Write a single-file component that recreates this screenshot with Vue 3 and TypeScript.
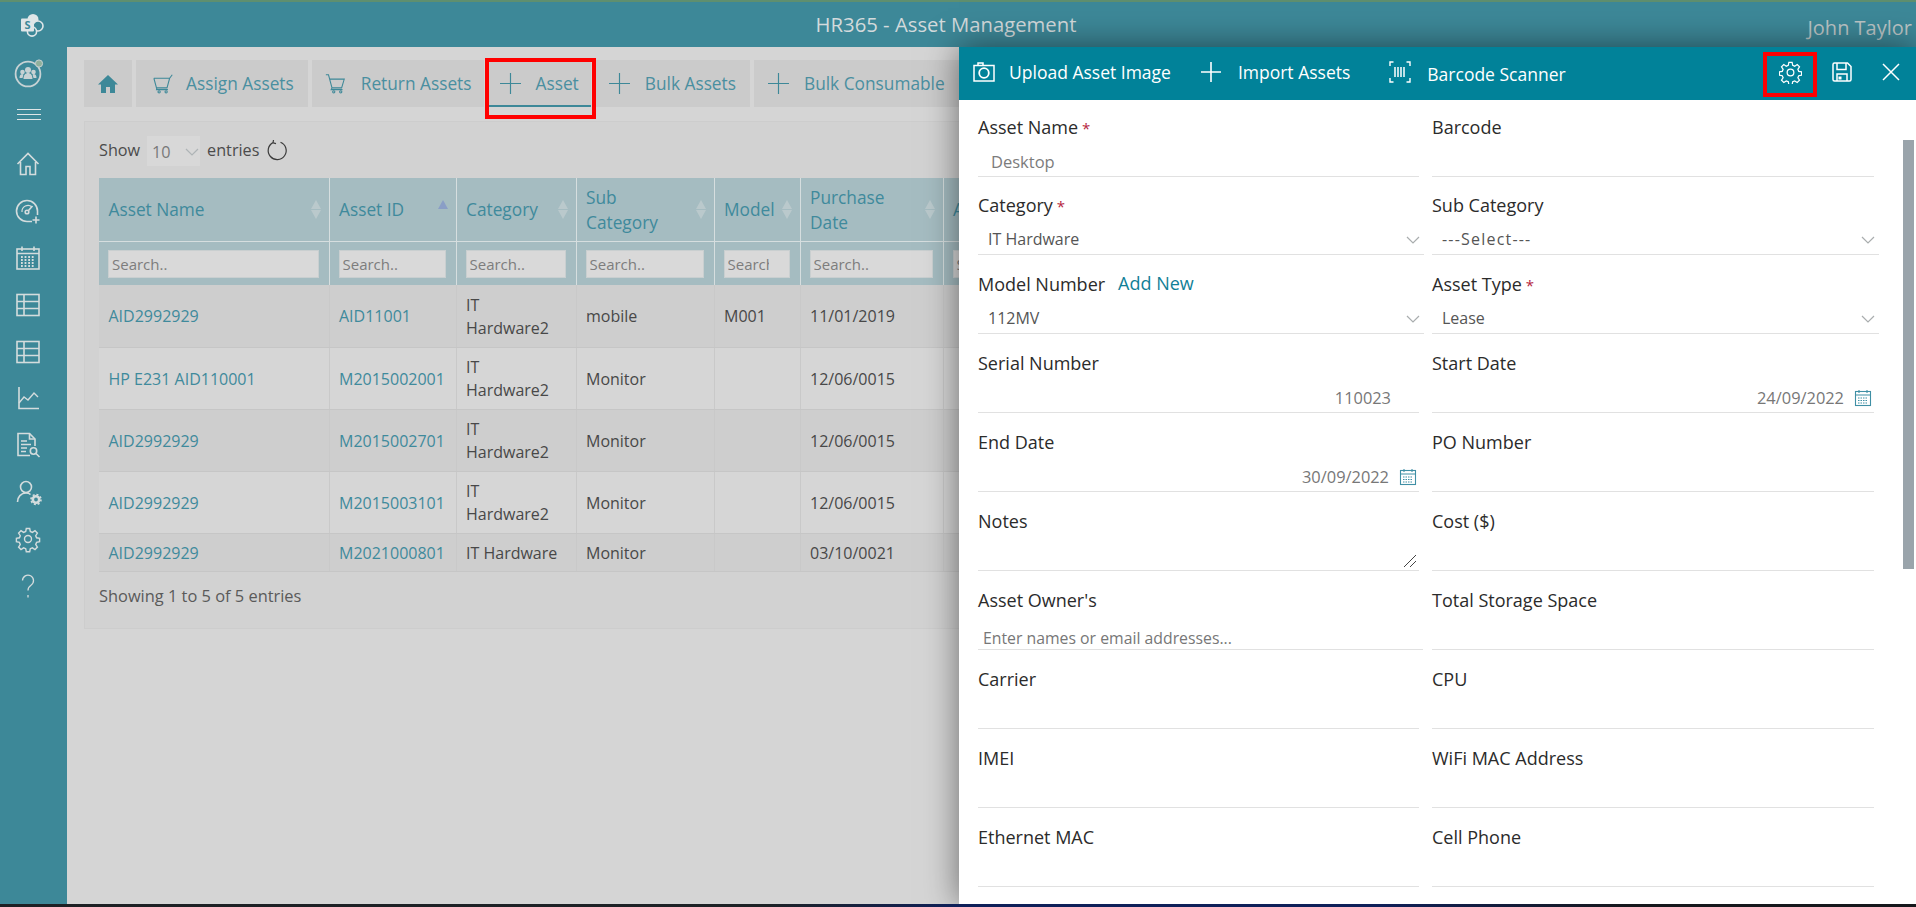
<script setup lang="ts">
interface Row { name: string; id: string; cat: string; sub: string; model: string; date: string; two: boolean }
interface Field { label: string; req?: boolean; add?: boolean; kind?: 'select' | 'value' | 'date' | 'notes' | 'owner' | 'placeholder'; value?: string }

const navIcons = ['home', 'gauge', 'calendar', 'table', 'table', 'chart', 'report', 'user', 'gear', 'help']

const headers = [
  { label: 'Asset Name', sort: 'both' }, { label: 'Asset ID', sort: 'up' }, { label: 'Category', sort: 'both' },
  { label: 'Sub Category', sort: 'both' }, { label: 'Model', sort: 'both' }, { label: 'Purchase Date', sort: 'both' },
  { label: 'Asset Type', sort: 'both' }
]

const rows: Row[] = [
  { name: 'AID2992929', id: 'AID11001', cat: 'IT Hardware2', sub: 'mobile', model: 'M001', date: '11/01/2019', two: true },
  { name: 'HP E231 AID110001', id: 'M2015002001', cat: 'IT Hardware2', sub: 'Monitor', model: '', date: '12/06/0015', two: true },
  { name: 'AID2992929', id: 'M2015002701', cat: 'IT Hardware2', sub: 'Monitor', model: '', date: '12/06/0015', two: true },
  { name: 'AID2992929', id: 'M2015003101', cat: 'IT Hardware2', sub: 'Monitor', model: '', date: '12/06/0015', two: true },
  { name: 'AID2992929', id: 'M2021000801', cat: 'IT Hardware', sub: 'Monitor', model: '', date: '03/10/0021', two: false }
]

const fields: Field[] = [
  { label: 'Asset Name', req: true, kind: 'placeholder', value: 'Desktop' }, { label: 'Barcode' },
  { label: 'Category', req: true, kind: 'select', value: 'IT Hardware' }, { label: 'Sub Category', kind: 'select', value: '---Select---' },
  { label: 'Model Number', add: true, kind: 'select', value: '112MV' }, { label: 'Asset Type', req: true, kind: 'select', value: 'Lease' },
  { label: 'Serial Number', kind: 'value', value: '110023' }, { label: 'Start Date', kind: 'date', value: '24/09/2022' },
  { label: 'End Date', kind: 'date', value: '30/09/2022' }, { label: 'PO Number' },
  { label: 'Notes', kind: 'notes' }, { label: 'Cost ($)' },
  { label: "Asset Owner's", kind: 'owner' }, { label: 'Total Storage Space' },
  { label: 'Carrier' }, { label: 'CPU' },
  { label: 'IMEI' }, { label: 'WiFi MAC Address' },
  { label: 'Ethernet MAC' }, { label: 'Cell Phone' }
]
</script>

<template>
  <div class="app">
    <header class="topbar">
      <svg class="sp-logo" viewBox="0 0 24 24" width="24" height="24">
        <circle cx="13" cy="6.500" r="5.500" fill="#dfe6e8" />
        <circle cx="18" cy="13" r="5" fill="#3d8898" stroke="#dfe6e8" stroke-width="1.600" />
        <circle cx="12" cy="18.500" r="4.600" fill="#3d8898" stroke="#dfe6e8" stroke-width="1.600" />
        <rect x="1" y="5.500" width="13" height="13" rx="1" fill="#dfe6e8" />
        <text x="7.500" y="15.600" text-anchor="middle" class="sp-s">S</text>
      </svg>
      <h1 class="title">HR365 - Asset Management</h1>
      <div class="user">John Taylor</div>
    </header>

    <div class="body">
      <aside class="sidebar">
        <div class="org">
          <svg viewBox="0 0 30 30" width="30" height="30">
            <circle cx="14" cy="16" r="12.400" fill="none" stroke="#c7d2d4" stroke-width="1.800" />
            <circle cx="25" cy="5.500" r="3.600" fill="#8fb09c" stroke="#c7d2d4" />
            <circle cx="14" cy="12" r="3" fill="#c7d2d4" /><circle cx="8.500" cy="14" r="2.300" fill="#c7d2d4" /><circle cx="19.500" cy="14" r="2.300" fill="#c7d2d4" />
            <path d="M9.500 21c0-4 2-6 4.500-6s4.500 2 4.500 6zM5.500 20c0-2.500 1-4 3-4l1 .5-1 3.500zM22.500 20c0-2.500-1-4-3-4l-1 .5 1 3.500z" fill="#c7d2d4" />
          </svg>
        </div>
        <div class="burger"><span></span><span></span><span></span></div>
        <nav class="nav">
          <div v-for="(icon, i) in navIcons" :key="i" class="nav-item">
            <svg viewBox="0 0 28 28" width="28" height="28" fill="none" stroke="#d4dcdd" stroke-width="1.600">
              <template v-if="icon === 'home'">
                <path d="M3.500 14 14 3.500 24.500 14M6.500 12v12.500h5.500v-8h4v8h5.500V12" />
              </template>
              <template v-else-if="icon === 'gauge'">
                <path d="M18 24.500H13a10.500 10.500 0 1 1 10.500-10.500v4" />
                <path d="M8 15a6 6 0 0 1 10-5" stroke-width="1.200" />
                <circle cx="13" cy="15" r="1.800" />
                <path d="m14.500 13.500 4-4.500M22 19.500v7M18.500 23h7" />
              </template>
              <template v-else-if="icon === 'calendar'">
                <rect x="3" y="5" width="22" height="20" /><path d="M3 9.500h22M8 2.500V7M20 2.500V7" />
                <path d="M7 13h14M7 16h14M7 19h14M7 22h14" stroke-dasharray="1.800 1.800" stroke-width="1.800" />
              </template>
              <template v-else-if="icon === 'table'">
                <rect x="3" y="3.500" width="22" height="21" /><path d="M3 10.500h22M3 17.500h22M10 3.500v21" />
              </template>
              <template v-else-if="icon === 'chart'">
                <path d="M5 3v21.500h20" /><path d="m5 19 5-6 4 3 6-7 4 4" stroke-width="1.400" />
              </template>
              <template v-else-if="icon === 'report'">
                <path d="M21 15V8l-5.500-5.500H4v22h12" /><path d="M15.500 2.500V8H21" />
                <path d="M7 10h6M7 13.500h10M7 17h6M7 20.500h5" />
                <circle cx="19.500" cy="20" r="3.200" /><path d="m22 22.500 3.500 3.500" />
              </template>
              <template v-else-if="icon === 'user'">
                <circle cx="12" cy="9" r="5.500" />
                <path d="M3.500 24c0-5 3.500-9 8.500-9 2 0 3.500.5 4.500 1.500" />
                <circle cx="22" cy="21.500" r="3.200" stroke-width="2.600" />
                <circle cx="22" cy="21.500" r="5" stroke-width="1.600" stroke-dasharray="2 1.900" />
              </template>
              <template v-else-if="icon === 'gear'">
                <g transform="translate(2 2)" stroke-width="1.400">
                  <circle cx="12" cy="12" r="3.500" />
                  <path d="M10.300 1.500h3.400l.6 3 2.100.9 2.600-1.700 2.400 2.400-1.700 2.600.9 2.100 3 .6v3.400l-3 .6-.9 2.100 1.700 2.600-2.400 2.400-2.600-1.700-2.100.9-.6 3h-3.400l-.6-3-2.100-.9-2.600 1.700-2.400-2.400 1.700-2.600-.9-2.100-3-.6v-3.400l3-.6.9-2.100-1.700-2.600 2.400-2.400 2.600 1.700 2.100-.9z" />
                </g>
              </template>
              <template v-else>
                <path d="M8.500 8.500a5.500 5.500 0 1 1 8.500 4.700c-2 1.300-3 2.500-3 5.300M14 23v2.500" stroke-width="1.300" />
              </template>
            </svg>
          </div>
        </nav>
      </aside>

      <main class="main">
        <div class="tabs">
          <div class="tab tab-home">
            <svg viewBox="0 0 20 20" width="20" height="20"><path d="M10 1 0 10.500h3V19h5v-6h4v6h5v-8.500h3z" fill="#3d8898" /></svg>
          </div>
          <div class="tab tab-assign">
            <svg class="tab-ic" viewBox="0 0 24 24" fill="none" stroke="#3d8898" stroke-width="1.200">
              <path d="M1 6h18l3-4M1 6l3 11h12l3-11M4.500 17 4 19h13" /><circle cx="7" cy="21.500" r="1.300" /><circle cx="15" cy="21.500" r="1.300" />
            </svg>
            <span>Assign Assets</span>
          </div>
          <div class="tab tab-return">
            <svg class="tab-ic" viewBox="0 0 24 24" fill="none" stroke="#3d8898" stroke-width="1.200">
              <path d="M1 2h3l4 15h11l3-10H5.500M8 17l-1 2h13" /><circle cx="10" cy="21.500" r="1.300" /><circle cx="18" cy="21.500" r="1.300" />
            </svg>
            <span>Return Assets</span>
          </div>
          <div class="tab tab-active">
            <svg class="tab-ic" viewBox="0 0 22 22" fill="none" stroke="#3d8898" stroke-width="1.200"><path d="M11 0v22M0 11h22" /></svg>
            <span>Asset</span>
          </div>
          <div class="tab">
            <svg class="tab-ic" viewBox="0 0 22 22" fill="none" stroke="#3d8898" stroke-width="1.200"><path d="M11 0v22M0 11h22" /></svg>
            <span>Bulk Assets</span>
          </div>
          <div class="tab">
            <svg class="tab-ic" viewBox="0 0 22 22" fill="none" stroke="#3d8898" stroke-width="1.200"><path d="M11 0v22M0 11h22" /></svg>
            <span>Bulk Consumable</span>
          </div>
        </div>

        <section class="card">
          <div class="show">
            <span>Show</span>
            <div class="len"><span>10</span>
              <svg viewBox="0 0 14 8" width="14" height="8" fill="none" stroke="#aeb4b6" stroke-width="1.200"><path d="m1 1 6 6 6-6" /></svg>
            </div>
            <span>entries</span>
            <svg class="refresh" viewBox="0 0 22 22" width="22" height="22" fill="none" stroke="#3b3b3b" stroke-width="1.200">
              <path d="M7 3.600a9 9 0 1 0 7.500-.4M7.500 1l-.5 2.900 3 .8" />
            </svg>
          </div>
          <table class="grid">
            <colgroup>
              <col class="c1" /><col class="c2" /><col class="c3" /><col class="c4" /><col class="c5" /><col class="c6" /><col class="c7" />
            </colgroup>
            <thead>
              <tr class="head">
                <th v-for="h in headers" :key="h.label">
                  <span class="h-text">{{ h.label }}</span>
                  <span class="sort">
                    <i class="up" :class="{ active: h.sort === 'up' }"></i>
                    <i v-if="h.sort === 'both'" class="down"></i>
                  </span>
                </th>
              </tr>
              <tr class="filter">
                <th v-for="h in headers" :key="h.label"><input placeholder="Search.." /></th>
              </tr>
            </thead>
            <tbody>
              <tr v-for="(r, i) in rows" :key="i" :class="[i % 2 ? 'even' : 'odd', { two: r.two }]">
                <td class="link">{{ r.name }}</td>
                <td class="link">{{ r.id }}</td>
                <td class="cat">{{ r.cat }}</td>
                <td>{{ r.sub }}</td>
                <td>{{ r.model }}</td>
                <td>{{ r.date }}</td>
                <td></td>
              </tr>
            </tbody>
          </table>
          <div class="info">Showing 1 to 5 of 5 entries</div>
        </section>
      </main>
    </div>

    <section class="panel">
      <div class="p-head">
        <div class="p-act act-upload">
          <svg viewBox="0 0 22 20" width="22" height="20" fill="none" stroke="#fff" stroke-width="1.500">
            <rect x="1" y="3.500" width="20" height="15.500" /><path d="M5 3.500V1h5v2.500" /><circle cx="11" cy="11" r="4.800" stroke-width="1.800" />
          </svg>
          <span>Upload Asset Image</span>
        </div>
        <div class="p-act act-import">
          <svg viewBox="0 0 22 22" width="22" height="22" fill="none" stroke="#fff" stroke-width="1.600"><path d="M11 1v20M1 11h20" /></svg>
          <span>Import Assets</span>
        </div>
        <div class="p-act act-barcode">
          <svg viewBox="0 0 22 22" width="22" height="22" fill="none" stroke="#fff" stroke-width="1.400">
            <path d="M4.500 1H1v4M17.500 1H21v4M4.500 21H1v-4M17.500 21H21v-4" />
            <path d="M6 6v10M9 6v10M12 6v10M15 6v10" stroke-width="1.500" />
          </svg>
          <span>Barcode Scanner</span>
        </div>
        <div class="p-tools">
          <svg viewBox="0 0 24 24" width="23" height="23" fill="none" stroke="#fff" stroke-width="1.300">
            <circle cx="12" cy="12" r="3.500" />
            <path d="M10.300 1.500h3.400l.6 3 2.100.9 2.600-1.700 2.400 2.400-1.700 2.600.9 2.100 3 .6v3.400l-3 .6-.9 2.100 1.700 2.600-2.400 2.400-2.600-1.700-2.100.9-.6 3h-3.400l-.6-3-2.100-.9-2.600 1.700-2.400-2.400 1.700-2.600-.9-2.100-3-.6v-3.400l3-.6.9-2.100-1.700-2.600 2.400-2.400 2.600 1.700 2.100-.9z" />
          </svg>
          <svg viewBox="0 0 20 20" width="20" height="20" fill="none" stroke="#fff" stroke-width="1.500">
            <path d="M1 2.500A1.500 1.500 0 0 1 2.500 1h13L19 4.500v13a1.500 1.500 0 0 1-1.500 1.500h-15A1.500 1.500 0 0 1 1 17.500z" />
            <path d="M5 1v6.500h9V1M5 19v-7h10v7" /><rect x="6.500" y="14.500" width="3" height="3" fill="#fff" stroke="none" />
          </svg>
          <svg viewBox="0 0 18 18" width="18" height="18" fill="none" stroke="#fff" stroke-width="1.500"><path d="m1 1 16 16M17 1 1 17" /></svg>
        </div>
      </div>
      <div class="p-body">
        <div v-for="f in fields" :key="f.label" class="field">
          <label class="f-label">{{ f.label }}<span v-if="f.req" class="req"> *</span><a v-if="f.add" class="add">Add New</a></label>
          <div class="ctl" :class="f.kind ? 'k-' + f.kind : ''">
            <template v-if="f.kind === 'select'">
              <span :class="{ dashed: f.value === '---Select---' }">{{ f.value }}</span>
              <svg viewBox="0 0 14 8" width="14" height="8" fill="none" stroke="#a9adae" stroke-width="1.200"><path d="m1 1 6 6 6-6" /></svg>
            </template>
            <template v-else-if="f.kind === 'date'">
              <span>{{ f.value }}</span>
              <svg viewBox="0 0 18 18" width="18" height="18" fill="none" stroke="#3f8fa5" stroke-width="1.100">
                <rect x="1.500" y="2.500" width="15" height="14" /><path d="M1.500 6h15M5 1v3M13 1v3" />
                <path d="M4 9h10M4 11.500h10M4 14h10" stroke-dasharray="1.500 1" />
              </svg>
            </template>
            <template v-else-if="f.kind === 'notes'">
              <svg class="grip" viewBox="0 0 14 14" width="14" height="14" fill="none" stroke="#444" stroke-width="1"><path d="M1 13 13 1M7 13l6-6" /></svg>
            </template>
            <span v-else-if="f.kind === 'owner'">Enter names or email addresses...</span>
            <span v-else-if="f.value">{{ f.value }}</span>
          </div>
        </div>
      </div>
      <div class="scroll"></div>
    </section>

    <div class="mark mark-tab"></div>
    <div class="mark mark-gear"></div>
    <div class="taskbar"></div>
  </div>
</template>

<style>
html, body { margin: 0; padding: 0; overflow: hidden; }
</style>

<style scoped>
* { box-sizing: border-box; }
.app {
  position: relative; width: 1916px; height: 907px; overflow: hidden;
  font-family: "Open Sans", "Noto Sans", sans-serif; font-size: 16px; color: #444;
  background: #3d8898; display: flex; flex-direction: column;
}
.topbar {
  height: 47px; flex: none; background: #3d8898; border-top: 2px solid #5f8f6f;
  display: grid; grid-template-columns: 1fr auto 1fr; align-items: center; padding-right: 24px;
}
.sp-logo { margin-left: 20px; }
.sp-s { font: bold 11px "Open Sans", sans-serif; fill: #3d8898; }
.title { margin: 0 0 2px; font-size: 20.300px; font-weight: 400; color: #d3dadc; }
.user { justify-self: end; margin: 5px -20px 0 0; font-size: 20px; color: #bcc5c6; white-space: nowrap; }

.body { flex: 1; display: flex; min-height: 0; }
.sidebar { width: 67px; flex: none; background: #3d8898; display: flex; flex-direction: column; align-items: center; padding-right: 12px; }
.org { height: 52px; display: flex; align-items: center; justify-content: center; margin-left: 2px; }
.burger { height: 31px; width: 24px; display: flex; flex-direction: column; justify-content: center; gap: 4px; margin-left: 3px; }
.burger span { height: 1px; background: #dfe6e7; }
.nav { margin-top: 11px; }
.nav-item { height: 46.800px; display: flex; align-items: center; justify-content: center; }

.main { flex: 1; background: #d5d5d5; padding: 13px 0 0 17px; min-width: 0; }
.tabs { display: flex; gap: 4px; height: 47px; color: #4a8fa0; font-size: 17.300px; }
.tab { background: #cbcbcb; display: flex; align-items: center; gap: 15px; padding: 0 14px; white-space: nowrap; flex: none; }
.tab-home { width: 48px; padding: 0 0 0 14px; }
.tab-assign { padding-left: 17px; gap: 12px; }
.tab-return { padding: 0 12px 0 13px; }
.tab-ic { width: 21px; height: 21px; flex: none; }
.tab-active { box-shadow: inset 0 -2px 0 #3d8898; padding: 0 12px; }

.card { width: 1830px; height: 508px; margin-top: 14px; background: #d2d2d2; border: 1px solid #cdcdcd; padding: 0 14px; }
.show { height: 56px; display: flex; align-items: center; gap: 7px; color: #4b4b4b; font-size: 16.200px; }
.len { width: 53px; height: 30px; margin-top: 2px; background: #d8d8d8; display: flex; align-items: center; justify-content: space-between; padding: 2px 1px 0 5px; color: #787878; }
.refresh { margin-left: 0; }

.grid { width: 974px; table-layout: fixed; border-collapse: collapse; }
.c1 { width: 230px; } .c2 { width: 127px; } .c3 { width: 120px; } .c4 { width: 138px; }
.c5 { width: 86px; } .c6 { width: 143px; } .c7 { width: 130px; }
.head th { position: relative; height: 63px; background: #a5bcc1; color: #3f8a9c; font-weight: 400; text-align: left; padding: 1px 26px 0 9.500px; line-height: 25px; border-right: 1px solid #d6dedf; font-size: 17.300px; }
.h-text { display: block; }
.sort { position: absolute; right: 7px; top: 22px; width: 11px; display: flex; flex-direction: column; gap: 1px; }
.sort i { display: block; width: 0; height: 0; border-left: 5.500px solid transparent; border-right: 5.500px solid transparent; }
.sort .up { border-bottom: 9px solid #bac9cc; }
.sort .down { border-top: 9px solid #bac9cc; }
.sort .up.active { border-bottom-color: #8a9ec6; }
.filter th { height: 44px; background: #a5bcc1; padding: 1px 10px 0 9px; border-top: 1px solid #d6dedf; border-right: 1px solid #d6dedf; }
.filter input { width: 100%; height: 28px; background: #d9d9d9; border: 1px solid #c9cfd0; padding: 0 20px 0 3px; font: 15px "Open Sans", sans-serif; color: #777; outline: none; display: block; }
.filter input::placeholder { color: #7d7d7d; opacity: 1; }
td { padding: 8px 9.500px 6px; line-height: 23px; border-bottom: 1px solid #c6c6c6; border-right: 1px solid #c9c9c9; vertical-align: middle; color: #484848; font-size: 16px; }
td.cat { padding-right: 15px; }
tr.two td { height: 62px; }
tr.odd td { background: #cecece; }
tr.even td { background: #d6d6d6; }
td.link { color: #3f8a9c; }
.info { margin-top: 12px; color: #5a5a5a; font-size: 16.400px; }

.panel {
  position: absolute; left: 959px; right: 0; top: 47px; bottom: 3px; background: #fff;
  box-shadow: 0 0 32px rgba(0, 0, 0, .5); overflow: hidden;
}
.p-head { height: 53px; background: #018299; color: #fff; display: flex; align-items: center; padding: 0 0 3px 14px; font-size: 17.500px; }
.p-act { display: flex; align-items: center; white-space: nowrap; }
.p-act svg { flex: none; }
.act-upload span { margin-left: 14px; }
.act-import { margin-left: 29px; }
.act-import span { margin-left: 16px; }
.act-barcode { margin-left: 39px; }
.act-barcode span { margin: 4px 0 0 16px; }
.p-tools { margin-left: auto; display: flex; align-items: center; gap: 30px; padding-right: 16px; }
.p-body { padding: 16.500px 0 0 19px; display: grid; grid-template-columns: 441px 442px; column-gap: 13px; row-gap: 18.900px; grid-auto-rows: 60px; }
.field { display: flex; flex-direction: column; height: 60px; }
.f-label { height: 20px; line-height: 20px; font-size: 18px; font-weight: 500; color: #2b2b2b; display: block; white-space: nowrap; }
.req { color: #b5243e; font-size: 15px; }
.add { color: #118097; margin-left: 13px; font-weight: 500; position: relative; top: -1px; }
.ctl { position: relative; height: 40px; border-bottom: 1px solid #e1e1e1; display: flex; align-items: flex-end; padding-bottom: 3px; line-height: 22px; color: #555; font-size: 16px; }
.k-placeholder { padding-left: 13px; color: #7c7c7c; font-size: 16.500px; }
.k-select { justify-content: space-between; padding-left: 10px; margin-right: -5px; padding-bottom: 4px; font-size: 16px; }
.k-select svg { margin: 0 4px 6px 0; }
.dashed { letter-spacing: 1.200px; }
.k-value { justify-content: flex-end; padding-right: 28px; color: #777; font-size: 16.400px; }
.k-date { justify-content: flex-end; color: #777; padding: 0 2px 3px 0; gap: 10px; font-size: 16.400px; }
.k-date svg { margin-bottom: 2px; }
.k-owner { margin-right: -4px; padding-left: 5px; color: #777; font-size: 15.800px; padding-bottom: 0; }
.grip { position: absolute; right: 2px; bottom: 2px; }
.scroll { position: absolute; left: 944px; top: 93px; width: 11px; height: 429px; background: #9aa4ab; }

.mark { position: absolute; border: 4px solid #f00; }
.mark-tab { left: 485px; top: 58px; width: 111px; height: 61px; }
.mark-gear { left: 1763px; top: 52px; width: 54px; height: 45px; }
.taskbar { position: absolute; left: 0; right: 0; bottom: 0; height: 3px; background: linear-gradient(90deg, #1d2024 0, #1d2226 40%, #0f2059 50%, #0f2059 72%, #16181c 85%); }
</style>
